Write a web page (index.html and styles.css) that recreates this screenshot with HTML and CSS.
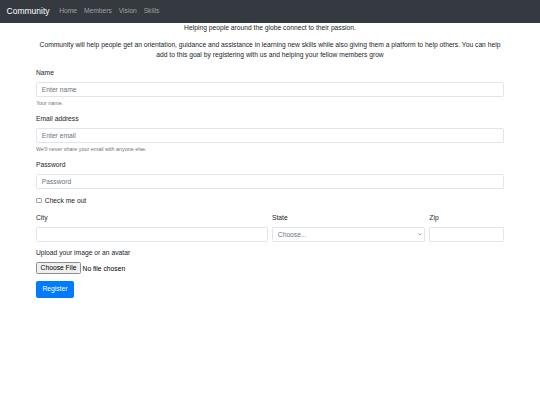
FILE: index.html
```html
<!DOCTYPE html>
<html lang="en">
<head>
<meta charset="utf-8">
<title>Community</title>
<link rel="stylesheet" href="styles.css">
</head>
<body>
<nav class="navbar">
  <a class="brand" href="#">Community</a>
  <ul class="nav">
    <li><a class="nav-link" href="#">Home</a></li>
    <li><a class="nav-link" href="#">Members</a></li>
    <li><a class="nav-link" href="#">Vision</a></li>
    <li><a class="nav-link" href="#">Skills</a></li>
  </ul>
</nav>
<main class="container">
  <p class="tagline">Helping people around the globe connect to their passion.</p>
  <p class="intro">Community will help people get an orientation, guidance and assistance in learning new skills while also giving them a platform to help others. You can help add to this goal by registering with us and helping your fellow members grow</p>
  <form class="form">
    <div class="group">
      <label class="label" for="name">Name</label>
      <input class="control" id="name" type="text" placeholder="Enter name">
      <small class="hint">Your name.</small>
    </div>
    <div class="group">
      <label class="label" for="email">Email address</label>
      <input class="control" id="email" type="email" placeholder="Enter email">
      <small class="hint">We'll never share your email with anyone else.</small>
    </div>
    <div class="group">
      <label class="label" for="pw">Password</label>
      <input class="control" id="pw" type="password" placeholder="Password">
    </div>
    <div class="group check">
      <input class="check-input" id="chk" type="checkbox">
      <label for="chk">Check me out</label>
    </div>
    <div class="row">
      <div class="col col-6">
        <label class="label" for="city">City</label>
        <input class="control" id="city" type="text">
      </div>
      <div class="col col-4">
        <label class="label" for="state">State</label>
        <div class="select-wrap">
          <select class="control select" id="state">
            <option>Choose...</option>
            <option>...</option>
          </select>
          <svg class="chevron" viewBox="0 0 8 5" width="3.6" height="2.4"><path d="M1 1l3 3 3-3" fill="none" stroke="#495057" stroke-width="1.4"/></svg>
        </div>
      </div>
      <div class="col col-2">
        <label class="label" for="zip">Zip</label>
        <input class="control" id="zip" type="text">
      </div>
    </div>
    <div class="group">
      <label class="label" for="file">Upload your image or an avatar</label>
      <input class="file" id="file" type="file">
    </div>
    <button class="btn" type="submit">Register</button>
  </form>
</main>
</body>
</html>
```
FILE: styles.css
```css
html, body {
  margin: 0;
  padding: 0;
  background: #fff;
}
body {
  font-family: "Liberation Sans", Arial, sans-serif;
  font-size: 6.72px;
  line-height: 10px;
  color: #212529;
}
.navbar {
  display: flex;
  align-items: center;
  height: 22.6px;
  padding: 0 6.6px;
  background: #343a40;
  box-sizing: border-box;
}
.brand {
  font-size: 8.5px;
  color: #fff;
  text-decoration: none;
  margin-right: 6.2px;
}
.nav {
  display: flex;
  list-style: none;
  margin: 0;
  padding: 0;
}
.nav-link {
  display: block;
  padding: 0 3.4px;
  color: rgba(255, 255, 255, 0.5);
  text-decoration: none;
  font-size: 6.72px;
}
.container {
  width: 468px;
  margin: 0 auto;
}
.tagline {
  margin: 0 0 7px;
  text-align: center;
}
.intro {
  margin: 0 0 7px;
  text-align: center;
}
.form {
  padding-top: 1px;
}
.group {
  margin-bottom: 7px;
}
.label {
  display: block;
  margin-bottom: 4px;
}
.control {
  display: block;
  width: 100%;
  height: 15px;
  box-sizing: border-box;
  padding: 0 4.8px;
  font-family: inherit;
  font-size: 6.72px;
  color: #495057;
  background: #fff;
  border: 1px solid #e1e4e8;
  border-radius: 1.6px;
  outline: none;
}
.control::placeholder {
  color: #6c757d;
}
.hint {
  display: block;
  margin-top: 2px;
  font-size: 5.38px;
  line-height: 8px;
  color: #6c757d;
}
.check {
  display: flex;
  align-items: center;
}
.check-input {
  appearance: none;
  -webkit-appearance: none;
  box-sizing: border-box;
  width: 5.6px;
  height: 5.6px;
  margin: 0 3.2px 0 0;
  border: 1px solid #a3a3a3;
  border-radius: 1px;
  background: #fff;
}
.row {
  display: flex;
  margin: 0 -2px 6px;
}
.col {
  padding: 0 2px;
  box-sizing: border-box;
}
.col-6 { flex: 0 0 50%; }
.col-4 { flex: 0 0 33.3333%; }
.col-2 { flex: 0 0 16.6667%; }
.select-wrap {
  position: relative;
}
.select {
  appearance: none;
  -webkit-appearance: none;
  color: #6c757d;
}
.chevron {
  position: absolute;
  right: 3.4px;
  top: 6.3px;
}
.file {
  display: block;
  font-family: inherit;
  font-size: 6.72px;
  color: #000;
}
.file::file-selector-button {
  font-family: inherit;
  font-size: 6.72px;
  height: 12px;
  padding: 0 3.6px;
  margin-right: 1.5px;
  border: 1px solid #8f8f8f;
  border-radius: 1.5px;
  background: #efefef;
  color: #000;
}
.btn {
  display: inline-block;
  padding: 2.5px 5.4px;
  font-family: inherit;
  font-size: 6.72px;
  line-height: 10px;
  color: #fff;
  background: #007bff;
  border: 0.4px solid #007bff;
  border-radius: 1.6px;
}
```
